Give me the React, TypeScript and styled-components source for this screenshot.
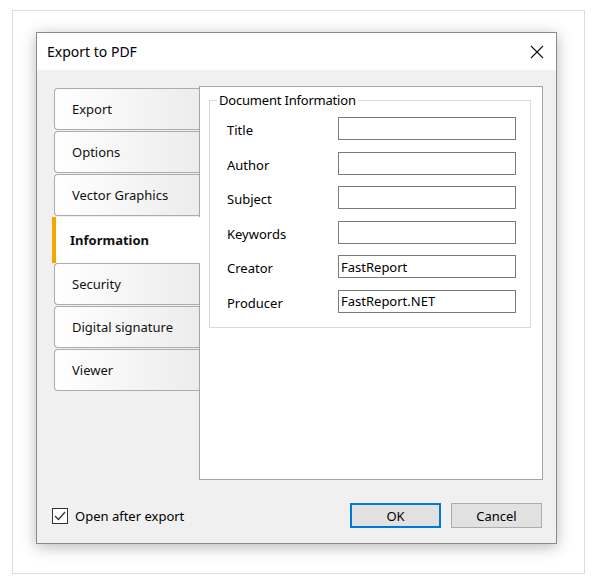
import React from "react";
import styled, { createGlobalStyle } from "styled-components";

const Global = createGlobalStyle`
  html, body { margin: 0; padding: 0; background: #ffffff; }
  body { font-family: "Noto Sans", "Open Sans", sans-serif; font-size: 13px; color: #000; }
  * { box-sizing: border-box; }
`;

const Frame = styled.div`
  margin: 10px 0 0 12px;
  width: 573px;
  height: 564px;
  border: 1px solid #d8dee8;
  padding: 21px 0 0 23px;
`;

const Dialog = styled.div`
  width: 521px;
  height: 512px;
  border: 1px solid #8a8a8a;
  background: #f0f0f0;
  box-shadow: 0 3px 14px rgba(0, 0, 0, 0.28);
  display: flex;
  flex-direction: column;
`;

const TitleBar = styled.div`
  height: 37px;
  background: #ffffff;
  display: flex;
  align-items: center;
  justify-content: space-between;
  padding: 0 12px 0 10px;
`;

const TitleText = styled.span`
  font-size: 14px;
  color: #000;
`;

const Body = styled.div`
  flex: 1;
  display: flex;
  flex-direction: column;
  padding: 16px 13px 15px 15px;
`;

const Main = styled.div`
  display: flex;
  height: 394px;
`;

const TabList = styled.div`
  width: 147px;
  flex-shrink: 0;
  margin-top: 2px;
  display: flex;
  flex-direction: column;
`;

const Tab = styled.div<{ $active?: boolean }>`
  position: relative;
  display: flex;
  align-items: center;
  font-size: 13px;
  color: #111;
  ${(p) =>
    p.$active
      ? `
    height: 46px;
    margin-right: -1px;
    z-index: 1;
    background: #ffffff;
    border-left: 4px solid #f7a600;
    padding-left: 14px;
    font-weight: 700;
  `
      : `
    height: 42px;
    margin: 0 0 1px 2px;
    background: linear-gradient(to right, #ffffff, #ececec);
    border: 1px solid #acacac;
    border-right: none;
    border-radius: 4px 0 0 4px;
    padding-left: 17px;
  `}
`;

const Panel = styled.div`
  flex: 1;
  min-width: 0;
  background: #ffffff;
  border: 1px solid #a5a5a5;
  padding: 5px 11px 0 9px;
`;

const GroupBox = styled.fieldset`
  margin: 0;
  min-width: 0;
  border: 1px solid #dadada;
  padding: 9px 14px 14px 7px;
`;

const Legend = styled.legend`
  padding: 0 2px;
  font-size: 13px;
  line-height: 16px;
  letter-spacing: -0.2px;
`;

const FieldGrid = styled.div`
  display: grid;
  grid-template-columns: 111px 1fr;
  row-gap: 11.6px;
  padding-left: 10px;
  align-items: center;
`;

const Label = styled.label`
  font-size: 13px;
  padding-top: 3px;
`;

const Input = styled.input`
  width: 100%;
  min-width: 0;
  height: 23px;
  border: 1px solid #7a7a7a;
  padding: 0 2px;
  font-family: inherit;
  font-size: 13px;
  color: #000;
  background: #fff;
  outline: none;
`;

const Footer = styled.div`
  margin-top: auto;
  display: flex;
  align-items: center;
  justify-content: space-between;
  padding-right: 1px;
`;

const CheckRow = styled.label`
  display: flex;
  align-items: center;
  gap: 7px;
  font-size: 13px;
`;

const CheckBox = styled.span`
  width: 16px;
  height: 16px;
  border: 1px solid #333;
  background: #fff;
  display: flex;
  align-items: center;
  justify-content: center;
`;

const Buttons = styled.div`
  display: flex;
  gap: 10px;
`;

const Button = styled.button<{ $primary?: boolean }>`
  width: 91px;
  height: 25px;
  background: #e1e1e1;
  border: ${(p) => (p.$primary ? "2px solid #0078d7" : "1px solid #adadad")};
  font-family: inherit;
  font-size: 13px;
  color: #000;
  padding: 0;
`;

const tabs = [
  "Export",
  "Options",
  "Vector Graphics",
  "Information",
  "Security",
  "Digital signature",
  "Viewer",
];

const fields: [string, string][] = [
  ["Title", ""],
  ["Author", ""],
  ["Subject", ""],
  ["Keywords", ""],
  ["Creator", "FastReport"],
  ["Producer", "FastReport.NET"],
];

export default function App() {
  return (
    <>
      <Global />
      <Frame>
        <Dialog>
          <TitleBar>
            <TitleText>Export to PDF</TitleText>
            <svg width="14" height="14" viewBox="0 0 14 14">
              <path d="M1 1 L13 13 M13 1 L1 13" stroke="#111" strokeWidth="1.1" fill="none" />
            </svg>
          </TitleBar>
          <Body>
            <Main>
              <TabList>
                {tabs.map((t) => (
                  <Tab key={t} $active={t === "Information"}>
                    {t}
                  </Tab>
                ))}
              </TabList>
              <Panel>
                <GroupBox>
                  <Legend>Document Information</Legend>
                  <FieldGrid>
                    {fields.map(([l, v]) => (
                      <React.Fragment key={l}>
                        <Label>{l}</Label>
                        <Input defaultValue={v} />
                      </React.Fragment>
                    ))}
                  </FieldGrid>
                </GroupBox>
              </Panel>
            </Main>
            <Footer>
              <CheckRow>
                <CheckBox>
                  <svg width="12" height="10" viewBox="0 0 12 10">
                    <path d="M1 5 L4.5 8.5 L11 1" stroke="#333" strokeWidth="1.3" fill="none" />
                  </svg>
                </CheckBox>
                Open after export
              </CheckRow>
              <Buttons>
                <Button $primary>OK</Button>
                <Button>Cancel</Button>
              </Buttons>
            </Footer>
          </Body>
        </Dialog>
      </Frame>
    </>
  );
}
